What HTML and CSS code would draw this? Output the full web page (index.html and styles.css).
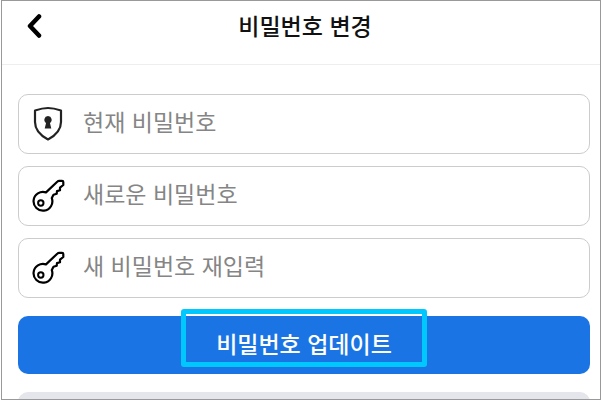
FILE: index.html
```
<!DOCTYPE html>
<html lang="ko">
<head>
    <meta charset="UTF-8">
    <meta name="viewport" content="width=device-width, initial-scale=1.0">
    <title>비밀번호 변경</title>
    <link rel="stylesheet" href="styles.css">
</head>
<body>
    <div class="screen">
        <header class="header">
            <button type="button" class="back" aria-label="뒤로">
                <svg width="16" height="26" viewBox="0 0 16 26">
                    <path d="M13 3.500 4 13l9 9.500" fill="none" stroke="#000" stroke-width="4.500" stroke-linecap="round" stroke-linejoin="round"/>
                </svg>
            </button>
            <h1>비밀번호 변경</h1>
        </header>
        <form class="password-form">
            <div class="field">
                <label for="current-password" aria-label="현재 비밀번호">
                    <svg width="34" height="36" viewBox="0 0 34 36">
                        <path d="M16 2C11.500 2 7.500 3 3 4.500V16c0 8.500 5.500 13.500 13 17.500 7.500-4 13-9 13-17.500V4.500C24.500 3 20.500 2 16 2Z" fill="none" stroke="#222" stroke-width="2.200" stroke-linejoin="round"/>
                        <path d="M16 10a4 4 0 0 1 2 7.300l1.300 5.200h-6.600l1.300-5.200A4 4 0 0 1 16 10Z" fill="#222"/>
                    </svg>
                </label>
                <input type="password" id="current-password" placeholder="현재 비밀번호">
            </div>
            <div class="field">
                <label for="new-password" aria-label="새로운 비밀번호">
                    <svg width="34" height="36" viewBox="0 0 34 36">
                        <path d="M14 14.400 25.500 3.500Q26.200 2.800 27.200 2.800H30q1.300 0 1.300 1.300V7L28 9.700v2.600l-3 .8-.3 2.700-3.200 1-1.700 3.300A9.400 9.400 0 1 1 14 14.400Z" fill="none" stroke="#000" stroke-width="2.200" stroke-linejoin="round"/>
                        <circle cx="8.800" cy="25" r="2.700" fill="none" stroke="#000" stroke-width="2"/>
                    </svg>
                </label>
                <input type="password" id="new-password" placeholder="새로운 비밀번호">
            </div>
            <div class="field">
                <label for="confirm-password" aria-label="새 비밀번호 재입력">
                    <svg width="34" height="36" viewBox="0 0 34 36">
                        <path d="M14 14.400 25.500 3.500Q26.200 2.800 27.200 2.800H30q1.300 0 1.300 1.300V7L28 9.700v2.600l-3 .8-.3 2.700-3.200 1-1.700 3.300A9.400 9.400 0 1 1 14 14.400Z" fill="none" stroke="#000" stroke-width="2.200" stroke-linejoin="round"/>
                        <circle cx="8.800" cy="25" r="2.700" fill="none" stroke="#000" stroke-width="2"/>
                    </svg>
                </label>
                <input type="password" id="confirm-password" placeholder="새 비밀번호 재입력">
            </div>
            <button type="submit" class="submit">비밀번호 업데이트<span class="highlight"></span></button>
            <div class="next-panel"></div>
        </form>
    </div>
</body>
</html>
```
FILE: styles.css
```
body {
    margin: 0 0 0 1px;
    font-family: "Noto Sans CJK KR", sans-serif;
    background-color: #fff;
}
.screen {
    height: 100vh;
    box-sizing: border-box;
    border: 1px solid #999;
    overflow: hidden;
}
.header {
    display: grid;
    grid-template-columns: 56px 1fr 48px;
    align-items: center;
    padding: 6px 0 8px;
    border-bottom: 1px solid #eee;
}
.header h1 {
    margin: 0;
    font-size: 23px;
    line-height: 36px;
    padding-bottom: 13px;
    font-weight: 500;
    text-align: center;
    color: #111;
}
.back {
    display: flex;
    padding: 0 0 12px 24px;
    border: 0;
    background: none;
    cursor: pointer;
}
.password-form {
    display: flex;
    flex-direction: column;
    gap: 12px;
    padding: 29px 10px 0 16px;
}
.field {
    display: flex;
    align-items: center;
    height: 60px;
    box-sizing: border-box;
    border: 1px solid #ccc;
    border-radius: 10px;
}
.field label {
    display: flex;
    padding: 0 17px 0 13px;
}
.field input {
    flex: 1;
    min-width: 0;
    padding: 0 0 6px;
    border: 0;
    outline: 0;
    background: none;
    font-family: inherit;
    font-size: 23px;
    line-height: 36px;
}
.field input::placeholder {
    color: #858585;
}
.submit {
    position: relative;
    height: 58px;
    margin: 6px 0;
    padding: 0 0 4px;
    border: 0;
    border-radius: 10px;
    background-color: #1b74e4;
    color: #fff;
    font-family: inherit;
    font-size: 23px;
    font-weight: 500;
    cursor: pointer;
}
.highlight {
    position: absolute;
    top: -7px;
    left: 50%;
    width: 246px;
    height: 58px;
    box-sizing: border-box;
    border: 5px solid #00c8ff;
    border-radius: 3px;
    transform: translateX(-50%);
}
.next-panel {
    height: 58px;
    border-radius: 10px;
    background-color: #e4e6eb;
}
```
